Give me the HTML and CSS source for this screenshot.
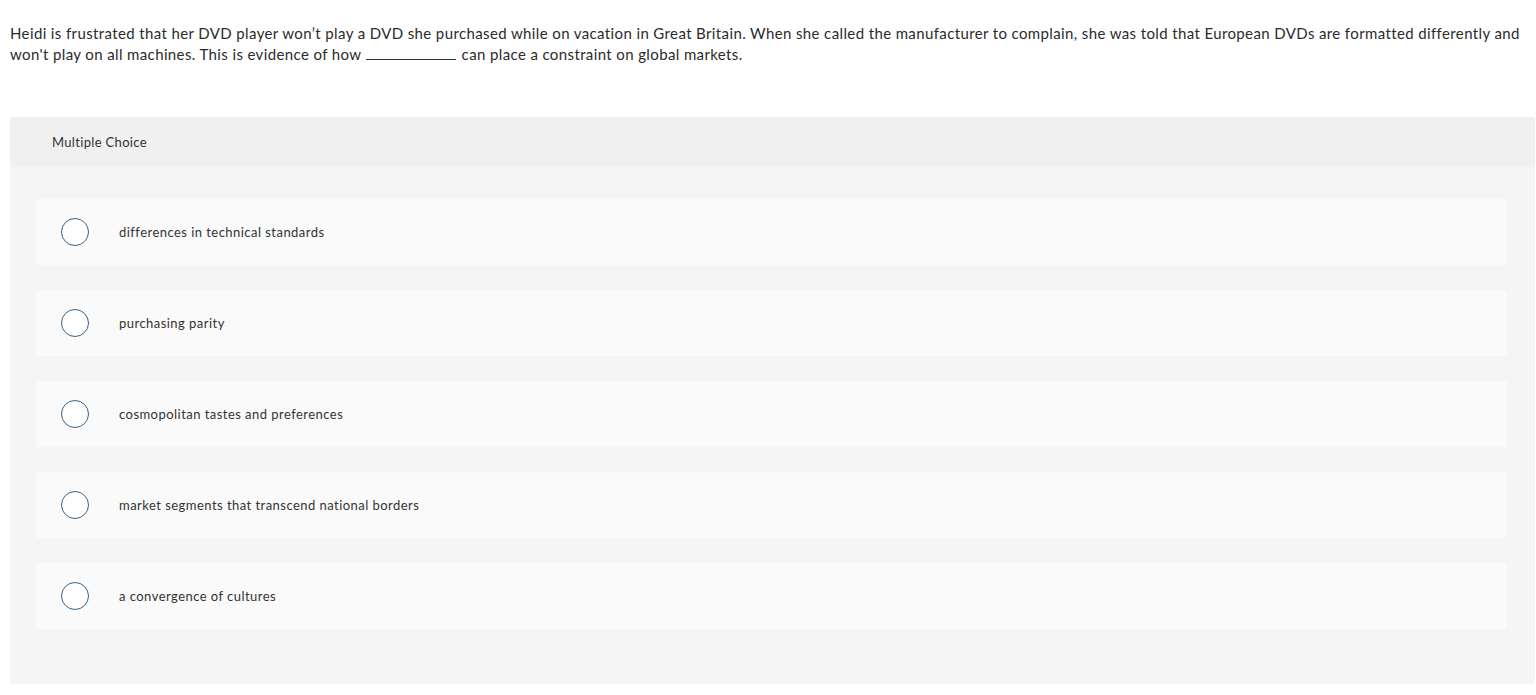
FILE: index.html
```html
<!DOCTYPE html>
<html>
<head>
<meta charset="utf-8">
<link rel="stylesheet" href="styles.css">
</head>
<body>
<div class="page">
  <p class="question">Heidi is frustrated that her DVD player won’t play a DVD she purchased while on vacation in Great Britain. When she called the manufacturer to complain, she was told that European DVDs are formatted differently and won't play on all machines. This is evidence of how <span class="blank"></span> can place a constraint on global markets.</p>
  <div class="panel">
    <div class="panel-header">Multiple Choice</div>
    <div class="panel-body">
      <div class="option"><span class="radio"></span><span class="label">differences in technical standards</span></div>
      <div class="option"><span class="radio"></span><span class="label">purchasing parity</span></div>
      <div class="option"><span class="radio"></span><span class="label">cosmopolitan tastes and preferences</span></div>
      <div class="option"><span class="radio"></span><span class="label">market segments that transcend national borders</span></div>
      <div class="option"><span class="radio"></span><span class="label">a convergence of cultures</span></div>
    </div>
  </div>
</div>
</body>
</html>
```
FILE: styles.css
```css
html, body {
  margin: 0;
  padding: 0;
  background: #fff;
}
body {
  font-family: Lato, "Open Sans", sans-serif;
  color: #333;
}
.page {
  padding: 0 1px 0 10px;
}
.question {
  margin: 0;
  padding-top: 23px;
  font-size: 15px;
  line-height: 21px;
  letter-spacing: 0.38px;
  color: #2b2b2b;
}
.blank {
  display: inline-block;
  width: 90px;
  border-bottom: 1px solid #333;
  vertical-align: baseline;
  height: 12px;
  margin: 0 1px;
}
.panel {
  margin-top: 52px;
  background: #f5f5f5;
  border-radius: 3px;
  overflow: hidden;
}
.panel-header {
  height: 50px;
  background: #f0f0f0;
  display: flex;
  align-items: center;
  padding-left: 42px;
  font-size: 13px;
  letter-spacing: 0.33px;
  color: #333;
}
.panel-body {
  padding: 32px 28px 55px 26px;
  display: flex;
  flex-direction: column;
  gap: 25px;
}
.option {
  height: 66px;
  background: #fafafa;
  border-radius: 3px;
  display: flex;
  align-items: center;
  padding-left: 25px;
}
.radio {
  width: 26px;
  height: 26px;
  border: 1.5px solid #33618e;
  border-radius: 50%;
  background: #fff;
  flex: none;
}
.label {
  margin-left: 30px;
  font-size: 13px;
  letter-spacing: 0.46px;
  color: #333;
}
```
